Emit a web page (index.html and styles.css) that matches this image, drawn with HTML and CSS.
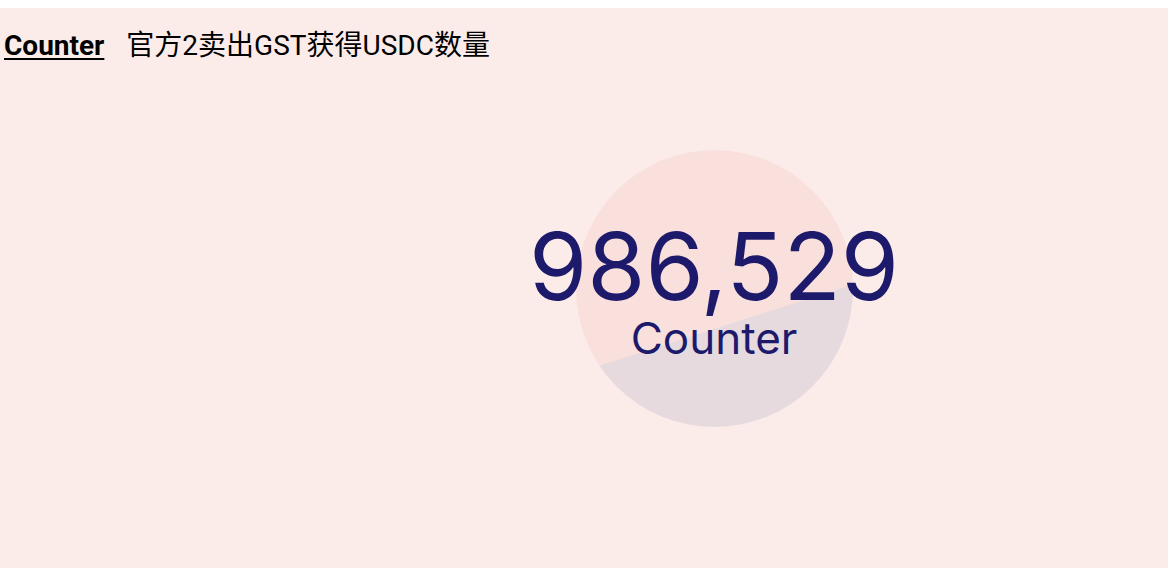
FILE: index.html
```html
<!DOCTYPE html>
<html lang="zh">
<head>
<meta charset="utf-8">
<title>Counter</title>
<link rel="stylesheet" href="styles.css">
</head>
<body>
<main class="page">
  <header class="header">
    <a class="brand" href="#">Counter</a>
    <h1 class="title">官方2卖出GST获得USDC数量</h1>
  </header>
  <section class="chart">
    <div class="legend"></div>
    <div class="stage">
      <div class="disc"></div>
      <div class="readout">
        <div class="value">986,529</div>
        <div class="label">Counter</div>
      </div>
    </div>
  </section>
</main>
</body>
</html>
```
FILE: styles.css
```css
html, body {
  margin: 0;
  padding: 0;
  background: #ffffff;
}
body {
  padding-top: 8px;
  font-family: Roboto, "Noto Sans CJK SC", sans-serif;
}
.page {
  background: #fbecea;
  height: 560px;
  overflow: hidden;
}
.header {
  display: flex;
  align-items: baseline;
  gap: 22px;
  padding: 21px 0 0 4px;
  height: 43px;
  box-sizing: border-box;
}
.brand {
  color: #000;
  font-weight: 700;
  font-size: 28px;
  line-height: 1.2;
  text-decoration: underline;
  text-decoration-thickness: 2px;
  text-underline-offset: 3px;
}
.title {
  margin: 0;
  font-weight: 400;
  font-size: 28px;
  line-height: 1.2;
  color: #000;
}
.chart {
  display: grid;
  grid-template-columns: 260px 1fr;
  height: 436px;
  margin-top: 19px;
}
.stage {
  display: grid;
  place-items: center;
}
.disc, .readout {
  grid-area: 1 / 1;
}
.disc {
  width: 277px;
  height: 277px;
  border-radius: 50%;
  background: linear-gradient(162.25deg, #f9e0dc 0, #f9e0dc 212px, #e6dadf 213px, #e6dadf 100%);
}
.readout {
  display: flex;
  flex-direction: column;
  align-items: center;
  color: #1d1a6b;
  font-family: Inter, "Noto Sans", sans-serif;
  padding-top: 8px;
}
.value {
  font-size: 94px;
  line-height: 1;
  font-weight: 400;
  margin-top: -6px;
}
.label {
  font-size: 44px;
  line-height: 1;
  margin-top: 3px;
}
```
